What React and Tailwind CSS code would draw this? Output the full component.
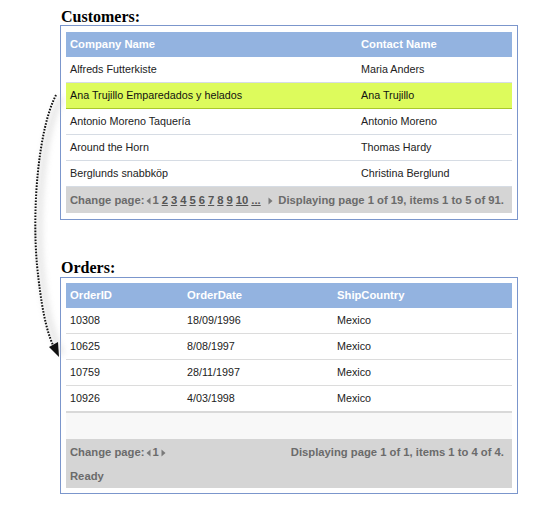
import React from "react";

const sans = "font-['Liberation_Sans',Tahoma,Arial,sans-serif]";

function Tri({ dir }) {
  return (
    <svg width="5" height="8" viewBox="0 0 5 8" className="inline-block shrink-0">
      <path d={dir === "l" ? "M4.5 0.5 L0.5 4 L4.5 7.5Z" : "M0.5 0.5 L4.5 4 L0.5 7.5Z"} fill="#7a7a7a" />
    </svg>
  );
}

const customers = [
  ["Alfreds Futterkiste", "Maria Anders"],
  ["Ana Trujillo Emparedados y helados", "Ana Trujillo"],
  ["Antonio Moreno Taquería", "Antonio Moreno"],
  ["Around the Horn", "Thomas Hardy"],
  ["Berglunds snabbköp", "Christina Berglund"],
];

const orders = [
  ["10308", "18/09/1996", "Mexico"],
  ["10625", "8/08/1997", "Mexico"],
  ["10759", "28/11/1997", "Mexico"],
  ["10926", "4/03/1998", "Mexico"],
];

export default function App() {
  return (
    <div className={`relative w-[539px] h-[509px] bg-white ${sans}`}>
      <div className="flex flex-col pl-[60px] w-[518px]">
        {/* Customers */}
        <div className="pt-[9px] h-[25px] pl-[1px] font-['Liberation_Serif',serif] font-bold text-[16px] leading-[16px] text-black">
          Customers:
        </div>
        <div className="border border-[#7b96cc] px-[5px] pt-[6px] pb-[6px]">
          <div className="grid grid-cols-[291px_1fr] h-[25px] items-center bg-[#93b3e0] text-white font-bold text-[11.25px]">
            <div className="pl-[4px]">Company Name</div>
            <div className="pl-[4px]">Contact Name</div>
          </div>
          {customers.map((r, i) => (
            <div
              key={i}
              className={
                i === 1
                  ? "grid grid-cols-[291px_1fr] h-[26px] items-center border-b border-[#a9c92a] bg-[#ddfb5c] text-[#111] text-[10.75px]"
                  : "grid grid-cols-[291px_1fr] h-[26px] items-center border-b border-[#d6dce4] text-[#222] text-[10.75px]"
              }
            >
              <div className="pl-[4px]">{r[0]}</div>
              <div className="pl-[4px]">{r[1]}</div>
            </div>
          ))}
          <div className="flex items-center justify-between h-[26px] pl-[4px] pr-[8px] bg-[#d5d5d5] text-[#6b6b6b] font-bold text-[11.25px]">
            <div className="flex items-center">
              <span>Change page:</span>
              <span className="ml-[2px] mr-[1px]"><Tri dir="l" /></span>
              <span>1</span>
              {["2", "3", "4", "5", "6", "7", "8", "9", "10", "..."].map((n) => (
                <span key={n} className="ml-[3px] underline text-[#555]">{n}</span>
              ))}
              <span className="ml-[7px]"><Tri dir="r" /></span>
            </div>
            <div>Displaying page 1 of 19, items 1 to 5 of 91.</div>
          </div>
        </div>

        {/* Orders */}
        <div className="mt-[40px] h-[17px] pl-[1px] font-['Liberation_Serif',serif] font-bold text-[16px] leading-[16px] text-black">
          Orders:
        </div>
        <div className="border border-[#7b96cc] px-[5px] pt-[5px] pb-[5px]">
          <div className="grid grid-cols-[117px_150px_1fr] h-[25px] items-center bg-[#93b3e0] text-white font-bold text-[11.25px]">
            <div className="pl-[4px]">OrderID</div>
            <div className="pl-[4px]">OrderDate</div>
            <div className="pl-[4px]">ShipCountry</div>
          </div>
          {orders.map((r, i) => (
            <div
              key={i}
              className={
                i === orders.length - 1
                  ? "grid grid-cols-[117px_150px_1fr] h-[27px] items-center border-b-2 border-[#d9d9d9] text-[#222] text-[10.75px]"
                  : "grid grid-cols-[117px_150px_1fr] h-[26px] items-center border-b border-[#dcdcdc] text-[#222] text-[10.75px]"
              }
            >
              <div className="pl-[4px]">{r[0]}</div>
              <div className="pl-[4px]">{r[1]}</div>
              <div className="pl-[4px]">{r[2]}</div>
            </div>
          ))}
          <div className="h-[26px] bg-[#f8f8f8]" />
          <div className="flex flex-col h-[49px] pl-[4px] pr-[8px] bg-[#d5d5d5] text-[#6b6b6b] font-bold text-[11.25px]">
            <div className="flex items-center justify-between h-[26px]">
              <div className="flex items-center">
                <span>Change page:</span>
                <span className="ml-[2px] mr-[1px]"><Tri dir="l" /></span>
                <span>1</span>
                <span className="ml-[2px]"><Tri dir="r" /></span>
              </div>
              <div>Displaying page 1 of 1, items 1 to 4 of 4.</div>
            </div>
            <div className="flex items-center h-[22px]">Ready</div>
          </div>
        </div>
      </div>

      {/* dotted arrow */}
      <svg className="absolute left-0 top-0 pointer-events-none" width="539" height="509" viewBox="0 0 539 509">
        <defs>
          <filter id="blur" x="-50%" y="-50%" width="200%" height="200%">
            <feGaussianBlur stdDeviation="3" />
          </filter>
        </defs>
        <path
          d="M57 96 C 38 130, 32 210, 37 265 C 41 310, 48 335, 58 352"
          fill="none"
          stroke="#bbbbbb"
          strokeWidth="5"
          opacity="0.45"
          filter="url(#blur)"
          transform="translate(4,2)"
        />
        <path
          d="M56 95 C 38 130, 32 210, 37 265 C 41 305, 46 330, 53 345"
          fill="none"
          stroke="#111"
          strokeWidth="2"
          strokeDasharray="1.6 1.4"
        />
        <path d="M49 347 L59 357 L58 342 Z" fill="#111" />
      </svg>
    </div>
  );
}
